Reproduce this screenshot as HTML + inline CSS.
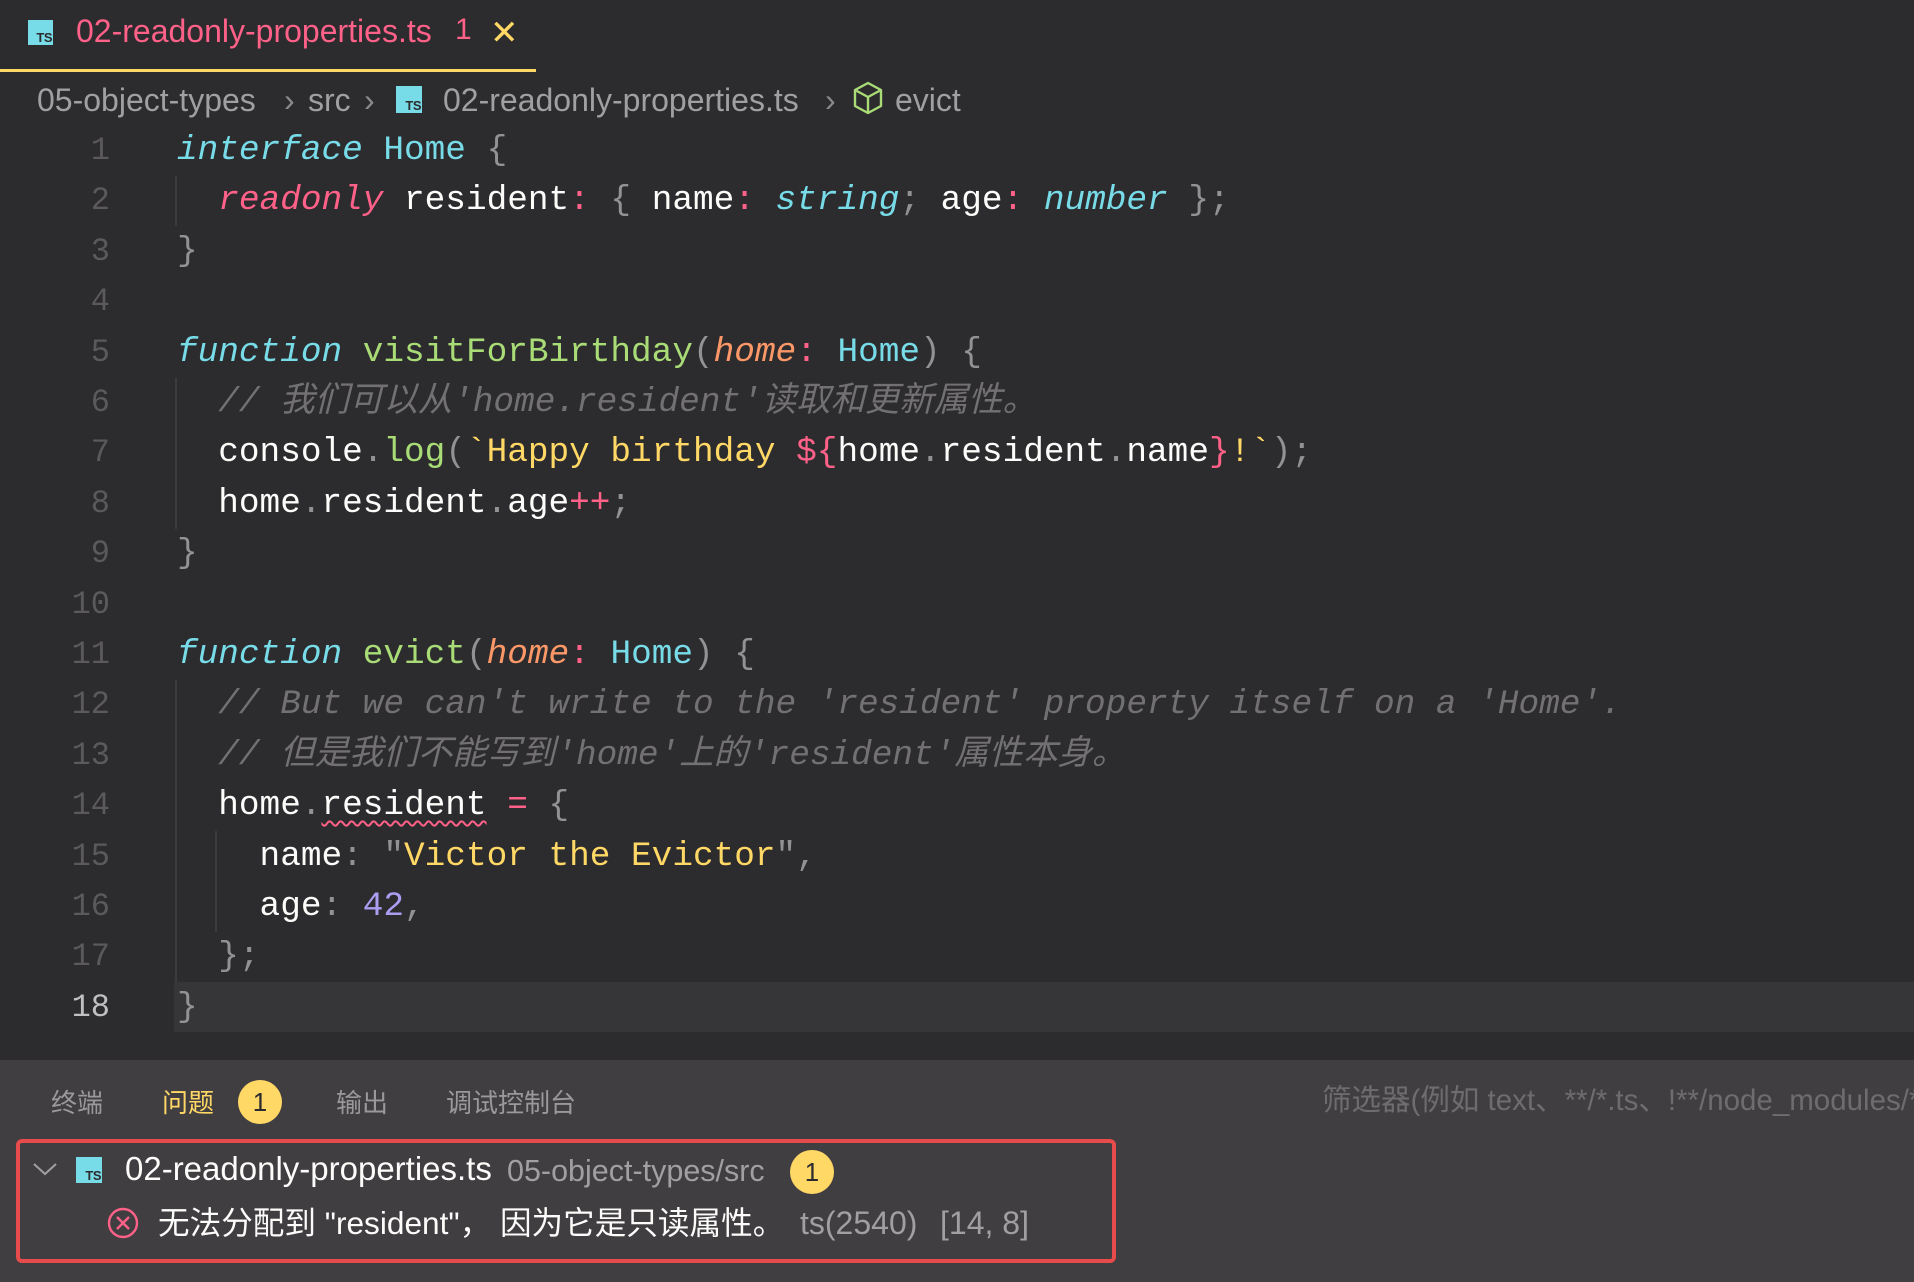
<!DOCTYPE html>
<html><head><meta charset="utf-8"><style>
*{margin:0;padding:0;box-sizing:border-box}
body{width:1914px;height:1282px;overflow:hidden;background:#2c2b2e;position:relative;font-family:"Liberation Sans","Noto Sans CJK SC",sans-serif}
.tabbar{position:absolute;left:0;top:0;width:1914px;height:72px;background:#2c2b2e}
.tab{position:absolute;left:0;top:0;width:536px;height:72px;border-bottom:3px solid #ffd866}
.ts{position:absolute;background:#78dce8;color:#2c2b2e;font:bold 13px "Liberation Sans",sans-serif;line-height:1}
.ts span{position:absolute;right:1px;bottom:1px;letter-spacing:-0.5px}
.crumb{position:absolute;top:78px;height:44px;font-size:32px;color:#a09fa1;white-space:nowrap;line-height:44px}
.sep{position:absolute;top:78px;font-size:32px;color:#8a898b;line-height:44px}
.code{position:absolute;left:0;top:126px;font-family:"Liberation Mono","Noto Sans CJK SC",monospace;font-size:34.4px;white-space:pre}
.ln{position:absolute;left:0;width:110px;text-align:right;color:#5b595c;height:50.4px;line-height:50.4px;font-size:32px}
.l{position:absolute;left:177px;height:50.4px;line-height:50.4px;color:#fcfcfa}
.k{color:#78dce8;font-style:italic}.t{color:#78dce8}.p{color:#ff6188}.pi{color:#ff6188;font-style:italic}
.g{color:#939293}.f{color:#a9dc76}.o{color:#fc9867;font-style:italic}.y{color:#ffd866}.n{color:#ab9df2}
.c{color:#727072;font-style:italic}
.guide{position:absolute;width:2px;background:#3d3b3f}
.panel{position:absolute;left:0;top:1060px;width:1914px;height:222px;background:#403e41}
.ptab{position:absolute;top:1084px;font-size:26px;color:#9a989b;line-height:36px;font-family:"Noto Sans CJK SC",sans-serif}
.badge{position:absolute;width:44px;height:44px;border-radius:50%;background:#ffd866;color:#2c2b2e;font-size:26px;text-align:center;line-height:44px}
</style></head><body>
<div class="tabbar"><div class="tab">
<div class="ts" style="left:28px;top:20px;width:25px;height:25px"><span>TS</span></div>
<div style="position:absolute;left:76px;top:13px;font-size:32px;color:#ff6188;white-space:nowrap">02-readonly-properties.ts</div>
<div style="position:absolute;left:455px;top:13px;font-size:30px;color:#ff6188">1</div>
<div style="position:absolute;left:490px;top:13px;font-size:34px;color:#ffd866">✕</div>
</div></div>
<div class="crumb" style="left:37px">05-object-types</div>
<div class="sep" style="left:284px">›</div>
<div class="crumb" style="left:308px">src</div>
<div class="sep" style="left:364px">›</div>
<div class="ts" style="left:396px;top:86px;width:26px;height:27px"><span>TS</span></div>
<div class="crumb" style="left:443px">02-readonly-properties.ts</div>
<div class="sep" style="left:825px">›</div>
<svg style="position:absolute;left:852px;top:81px" width="32" height="34" viewBox="0 0 32 34"><path d="M16 2 L29 9 L29 25 L16 32 L3 25 L3 9 Z M3 9 L16 16 L29 9 M16 16 L16 32" fill="none" stroke="#a9dc76" stroke-width="2.4" stroke-linejoin="round"/></svg>
<div class="crumb" style="left:895px">evict</div>

<div style="position:absolute;left:174px;top:982px;width:1740px;height:50px;background:#363538"></div>
<div class="guide" style="left:175px;top:176px;height:50px"></div>
<div class="guide" style="left:175px;top:378px;height:151px"></div>
<div class="guide" style="left:175px;top:680px;height:302px"></div>
<div class="guide" style="left:215px;top:831px;height:101px"></div>

<div class="code">
<div class="ln" style="top:0">1</div><div class="l" style="top:0"><span class="k">interface</span> <span class="t">Home</span> <span class="g">{</span></div>
<div class="ln" style="top:50.4px">2</div><div class="l" style="top:50.4px">  <span class="pi">readonly</span> resident<span class="p">:</span> <span class="g">{</span> name<span class="p">:</span> <span class="k">string</span><span class="g">;</span> age<span class="p">:</span> <span class="k">number</span> <span class="g">};</span></div>
<div class="ln" style="top:100.8px">3</div><div class="l" style="top:100.8px"><span class="g">}</span></div>
<div class="ln" style="top:151.2px">4</div>
<div class="ln" style="top:201.6px">5</div><div class="l" style="top:201.6px"><span class="k">function</span> <span class="f">visitForBirthday</span><span class="g">(</span><span class="o">home</span><span class="p">:</span> <span class="t">Home</span><span class="g">)</span> <span class="g">{</span></div>
<div class="ln" style="top:252px">6</div><div class="l c" style="top:252px">  // 我们可以从'home.resident'读取和更新属性。</div>
<div class="ln" style="top:302.4px">7</div><div class="l" style="top:302.4px">  console<span class="g">.</span><span class="f">log</span><span class="g">(</span><span class="y">`Happy birthday </span><span class="p">${</span>home<span class="g">.</span>resident<span class="g">.</span>name<span class="p">}</span><span class="y">!`</span><span class="g">);</span></div>
<div class="ln" style="top:352.8px">8</div><div class="l" style="top:352.8px">  home<span class="g">.</span>resident<span class="g">.</span>age<span class="p">++</span><span class="g">;</span></div>
<div class="ln" style="top:403.2px">9</div><div class="l" style="top:403.2px"><span class="g">}</span></div>
<div class="ln" style="top:453.6px">10</div>
<div class="ln" style="top:504px">11</div><div class="l" style="top:504px"><span class="k">function</span> <span class="f">evict</span><span class="g">(</span><span class="o">home</span><span class="p">:</span> <span class="t">Home</span><span class="g">)</span> <span class="g">{</span></div>
<div class="ln" style="top:554.4px">12</div><div class="l c" style="top:554.4px">  // But we can't write to the 'resident' property itself on a 'Home'.</div>
<div class="ln" style="top:604.8px">13</div><div class="l c" style="top:604.8px">  // 但是我们不能写到'home'上的'resident'属性本身。</div>
<div class="ln" style="top:655.2px">14</div><div class="l" style="top:655.2px">  home<span class="g">.</span><span style="text-decoration:underline wavy #ff6188;text-underline-offset:6px;text-decoration-thickness:2px">resident</span> <span class="p">=</span> <span class="g">{</span></div>
<div class="ln" style="top:705.6px">15</div><div class="l" style="top:705.6px">    name<span class="g">:</span> <span class="g">"</span><span class="y">Victor the Evictor</span><span class="g">",</span></div>
<div class="ln" style="top:756px">16</div><div class="l" style="top:756px">    age<span class="g">:</span> <span class="n">42</span><span class="g">,</span></div>
<div class="ln" style="top:806.4px">17</div><div class="l" style="top:806.4px">  <span class="g">};</span></div>
<div class="ln" style="top:856.8px;color:#c1c0c0">18</div><div class="l" style="top:856.8px"><span class="g">}</span></div>
</div>

<div class="panel"></div>
<div class="ptab" style="left:51px">终端</div>
<div class="ptab" style="left:162px;color:#ffd866">问题</div>
<div class="badge" style="left:238px;top:1080px">1</div>
<div class="ptab" style="left:336px">输出</div>
<div class="ptab" style="left:446px">调试控制台</div>
<div class="ptab" style="left:1322px;top:1083px;font-size:29.5px;color:#6e6c6f;white-space:nowrap;font-family:'Liberation Sans','Noto Sans CJK SC',sans-serif">筛选器(例如 text、**/*.ts、!**/node_modules/**)</div>

<div style="position:absolute;left:16px;top:1139px;width:1100px;height:124px;border:4px solid #e84b4b;border-radius:6px"></div>
<svg style="position:absolute;left:31px;top:1160px" width="28" height="18" viewBox="0 0 28 18"><path d="M3 4 L14 14 L25 4" fill="none" stroke="#a09fa1" stroke-width="2"/></svg>
<div class="ts" style="left:76px;top:1157px;width:26px;height:26px"><span>TS</span></div>
<div style="position:absolute;left:125px;top:1149px;font-size:33px;color:#fcfcfa;white-space:nowrap;line-height:40px">02-readonly-properties.ts</div>
<div style="position:absolute;left:507px;top:1151px;font-size:30.5px;color:#a09fa1;white-space:nowrap;line-height:40px">05-object-types/src</div>
<div class="badge" style="left:790px;top:1150px">1</div>
<svg style="position:absolute;left:106px;top:1206px" width="34" height="34" viewBox="0 0 34 34"><circle cx="17" cy="17" r="14" fill="none" stroke="#ff6188" stroke-width="2.4"/><path d="M11 11 L23 23 M23 11 L11 23" stroke="#ff6188" stroke-width="2.4"/></svg>
<div style="position:absolute;left:158px;top:1203px;font-size:31.6px;color:#fcfcfa;white-space:nowrap;line-height:40px;font-family:'Liberation Sans','Noto Sans CJK SC',sans-serif">无法分配到 "resident"， 因为它是只读属性。</div>
<div style="position:absolute;left:800px;top:1203px;font-size:32px;color:#a09fa1;white-space:nowrap;line-height:40px">ts(2540)</div>
<div style="position:absolute;left:940px;top:1203px;font-size:32px;color:#a09fa1;white-space:nowrap;line-height:40px">[14, 8]</div>
</body></html>
